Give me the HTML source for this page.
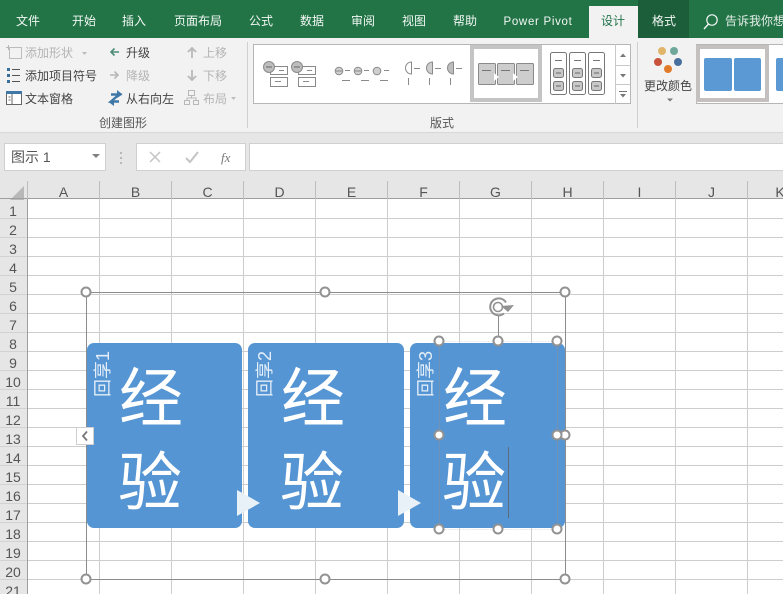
<!DOCTYPE html>
<html lang="zh"><head><meta charset="utf-8"><style>
html,body{margin:0;padding:0;background:#fff;overflow:hidden}
svg{display:block}
text{font-family:"Liberation Sans","Noto Sans CJK SC",sans-serif}
.t{font-size:12px;fill:#444}
.g{font-size:12px;fill:#b4b4b4}
.w{font-size:12px;fill:#f2f7f4;text-anchor:middle}
.h{font-size:14px;fill:#555;text-anchor:middle}
.r{font-size:14px;fill:#555;text-anchor:middle}
.big{font-size:64px;fill:#fff}
.sm{font-size:18px;fill:#e4eef8}
.hd{fill:#fff;stroke:#929292;stroke-width:2}
.ic{fill:none;stroke:#8a8a8a;stroke-width:1}
</style></head><body>
<svg width="783" height="594" viewBox="0 0 783 594" xmlns="http://www.w3.org/2000/svg">
<!-- Sheet -->
<rect x="0" y="0" width="783" height="594" fill="#fff"/>
<path d="M99.500 199V594M171.500 199V594M243.500 199V594M315.500 199V594M387.500 199V594M459.500 199V594M531.500 199V594M603.500 199V594M675.500 199V594M747.500 199V594" stroke="#cdcdcd" fill="none"/>
<path d="M27 218.500H783M27 237.500H783M27 256.500H783M27 275.500H783M27 294.500H783M27 313.500H783M27 332.500H783M27 351.500H783M27 370.500H783M27 389.500H783M27 408.500H783M27 427.500H783M27 446.500H783M27 465.500H783M27 484.500H783M27 503.500H783M27 522.500H783M27 541.500H783M27 560.500H783M27 579.500H783" stroke="#cdcdcd" fill="none"/>
<!-- Ribbon -->
<rect x="0" y="0" width="783" height="38" fill="#227447"/>
<rect x="0" y="38" width="783" height="94" fill="#f2f2f2"/>
<rect x="0" y="132" width="783" height="1" fill="#d8d8d8"/>
<rect x="0" y="133" width="783" height="47" fill="#e6e6e6"/>
<rect x="638" y="0" width="51" height="38" fill="#1b5e39"/>
<rect x="589" y="6" width="49" height="32" fill="#f2f2f2"/>
<text class="w" x="28" y="25">文件</text>
<text class="w" x="84" y="25">开始</text>
<text class="w" x="134" y="25">插入</text>
<text class="w" x="198" y="25">页面布局</text>
<text class="w" x="261" y="25">公式</text>
<text class="w" x="312" y="25">数据</text>
<text class="w" x="363" y="25">审阅</text>
<text class="w" x="414" y="25">视图</text>
<text class="w" x="465" y="25">帮助</text>
<text class="w" x="538" y="25" style="letter-spacing:.7px;font-size:11.500px">Power Pivot</text>
<text class="w" x="613" y="25" style="fill:#22744a">设计</text>
<text class="w" x="664" y="25">格式</text>
<circle cx="712" cy="20" r="5.200" fill="none" stroke="#f2f7f4" stroke-width="1.200"/>
<path d="M708.500 24L704 29" stroke="#f2f7f4" stroke-width="1.400"/>
<text x="725" y="25" style="font-size:12px;fill:#e4eee8">告诉我你想</text>

<!-- Create graphic group -->
<path d="M6 47.500h5M8.500 45v5" stroke="#b8b8b8" fill="none"/>
<rect x="9.500" y="47.500" width="12" height="11" fill="none" stroke="#bdbdbd"/>
<text class="g" x="25" y="57">添加形状</text>
<path d="M82 52h5l-2.500 3z" fill="#bdbdbd"/>
<g fill="#3a6f9c"><rect x="7" y="68" width="3" height="3"/><rect x="7" y="74" width="3" height="3"/><rect x="7" y="80" width="3" height="3"/></g>
<path d="M12 69.500h8M12 75.500h8M12 81.500h8" stroke="#555"/>
<text class="t" x="25" y="80">添加项目符号</text>
<rect x="6.500" y="91.500" width="15" height="13" fill="#fff" stroke="#666"/>
<rect x="6" y="91" width="16" height="3" fill="#3f78a8"/>
<path d="M12 94v10M8.500 97h2M8.500 100h2" stroke="#666"/>
<text class="t" x="25" y="103">文本窗格</text>

<path d="M119 52h-8m3.500-3.500L111 52l3.500 3.500" fill="none" stroke="#4d8c78" stroke-width="1.600"/>
<text class="t" x="126" y="57">升级</text>
<path d="M110 75h8m-3.500-3.500L118 75l-3.500 3.500" fill="none" stroke="#b8b8b8" stroke-width="1.600"/>
<text class="g" x="126" y="80">降级</text>
<path d="M111 94.500h8l-8 7h8" fill="none" stroke="#3f78a8" stroke-width="2.400"/>
<path d="M117 90l5.500 4.500-5.500 3.500zM114 98l-5.500 4 5.500 4z" fill="#3f78a8"/>
<text class="t" x="126" y="103">从右向左</text>

<path d="M192 58v-10m-4 4l4-4 4 4" fill="none" stroke="#b8b8b8" stroke-width="1.800"/>
<text class="g" x="203" y="57">上移</text>
<path d="M192 70v10m-4-4l4 4 4-4" fill="none" stroke="#b8b8b8" stroke-width="1.800"/>
<text class="g" x="203" y="80">下移</text>
<path d="M188.500 90.500h6v5h-6zM184.500 100.500h5v4h-5zM193.500 100.500h5v4h-5zM191.500 95.500v3M187 100v-2h9v2" fill="none" stroke="#b8b8b8"/>
<text class="g" x="203" y="103">布局</text>
<path d="M231 97h5l-2.500 3z" fill="#bdbdbd"/>
<text class="t" x="99" y="127" style="fill:#555">创建图形</text>
<rect x="247" y="42" width="1" height="86" fill="#cfcfcf"/>

<!-- Layout gallery -->
<rect x="253.500" y="44.500" width="377" height="59" fill="#fff" stroke="#b6b6b6"/>
<g class="ic">
<rect x="270.500" y="66.500" width="17" height="8"/><rect x="270.500" y="77.500" width="17" height="9"/>
<rect x="298.500" y="66.500" width="17" height="8"/><rect x="298.500" y="77.500" width="17" height="9"/>
<path d="M275 81.500h6M303 81.500h6M279 70.500h5M307 70.500h5"/>
</g>
<circle cx="269" cy="67" r="5.500" fill="#bdbdbd" stroke="#8a8a8a"/><path d="M266 67h6" stroke="#666"/>
<circle cx="297" cy="67" r="5.500" fill="#bdbdbd" stroke="#8a8a8a"/><path d="M294 67h6" stroke="#666"/>
<g fill="#cfcfcf" stroke="#8a8a8a"><circle cx="339" cy="71" r="3.800"/><circle cx="358" cy="71" r="3.800"/><circle cx="377" cy="71" r="3.800"/></g>
<path d="M336 71h6M355 71h6M345 70.500h5M364 70.500h5M384 70.500h5M342 80.500h8M361 80.500h8M380 80.500h8" stroke="#8a8a8a"/>
<path d="M411.500 62a6 6 0 0 0 0 12z" fill="#fff" stroke="#8a8a8a"/>
<path d="M432.500 62a6 6 0 0 0 0 12z" fill="#cfcfcf" stroke="#8a8a8a"/>
<path d="M453.500 62a6 6 0 0 0 0 12z" fill="#bdbdbd" stroke="#8a8a8a"/>
<path d="M414 68.500h6M435 68.500h6M456 68.500h6M408.500 78v7M429.500 78v7M450.500 78v7" stroke="#8a8a8a"/>
<rect x="472" y="47" width="68" height="53" fill="#fff" stroke="#c4c4c4" stroke-width="4"/>
<g fill="#cdcdcd" stroke="#8a8a8a"><rect x="478.500" y="63.500" width="17" height="21" rx="1"/><rect x="497.500" y="63.500" width="17" height="21" rx="1"/><rect x="516.500" y="63.500" width="17" height="21" rx="1"/></g>
<path d="M482 70.500h9M501 70.500h9M520 70.500h9" stroke="#777"/>
<path d="M494 73l5 4-5 4zM513 73l5 4-5 4z" fill="#fff"/>
<g fill="#fff" stroke="#777"><rect x="550.500" y="52.500" width="16" height="42" rx="2"/><rect x="569.500" y="52.500" width="16" height="42" rx="2"/><rect x="588.500" y="52.500" width="16" height="42" rx="2"/></g>
<path d="M555 60.500h7M574 60.500h7M593 60.500h7" stroke="#777"/>
<g fill="#c8c8c8" stroke="#777"><rect x="553.500" y="68.500" width="10" height="9" rx="2"/><rect x="553.500" y="81.500" width="10" height="9" rx="2"/><rect x="572.500" y="68.500" width="10" height="9" rx="2"/><rect x="572.500" y="81.500" width="10" height="9" rx="2"/><rect x="591.500" y="68.500" width="10" height="9" rx="2"/><rect x="591.500" y="81.500" width="10" height="9" rx="2"/></g>
<path d="M556 73h5M556 86h5M575 73h5M575 86h5M594 73h5M594 86h5" stroke="#666"/>
<path d="M615.500 44.500v59M615.500 65.500h15M615.500 84.500h15" stroke="#c8c8c8" fill="none"/>
<path d="M620 57l3-3.500 3 3.500z" fill="#777"/><path d="M620 74h6l-3 3.500z" fill="#777"/>
<path d="M619 91.500h8" stroke="#777"/><path d="M620 94h6l-3 3.500z" fill="#777"/>
<text class="t" x="430" y="127" style="fill:#555">版式</text>
<rect x="637" y="42" width="1" height="86" fill="#cfcfcf"/>

<!-- Change colors -->
<circle cx="662" cy="51" r="4" fill="#e0b469"/>
<circle cx="674" cy="51" r="4" fill="#6fa89a"/>
<circle cx="658" cy="62" r="4" fill="#c9523c"/>
<circle cx="678" cy="62" r="4" fill="#47709f"/>
<circle cx="668" cy="69" r="4" fill="#e07b2b"/>
<text class="t" x="644" y="90">更改颜色</text>
<path d="M667 98.500h6l-3 3z" fill="#777"/>
<rect x="696.500" y="44.500" width="90" height="59" fill="#fff" stroke="#b6b6b6"/>
<rect x="698" y="47" width="69" height="53" fill="#fff" stroke="#c4c0bf" stroke-width="4"/>
<rect x="704" y="58" width="28" height="33" rx="2" fill="#5a99d4"/>
<rect x="734" y="58" width="27" height="33" rx="2" fill="#5a99d4"/>
<rect x="776" y="58" width="10" height="33" rx="2" fill="#5a99d4"/>

<!-- Formula bar -->
<rect x="4.500" y="143.500" width="101" height="27" fill="#fff" stroke="#d0d0d0"/>
<text x="11" y="162" style="font-size:14px;fill:#555">图示 1</text>
<path d="M92 154h8l-4 4z" fill="#808080"/>
<path d="M121 152v2M121 157v2M121 162v2" stroke="#a8a8a8" stroke-width="1.500"/>
<rect x="136.500" y="143.500" width="109" height="27" fill="#fff" stroke="#d0d0d0"/>
<path d="M150 152l10 10M160 152l-10 10" stroke="#c4c4c4" stroke-width="1.500"/>
<path d="M186 158l4 4 8-10" fill="none" stroke="#c4c4c4" stroke-width="2"/>
<text x="221" y="162" style="font-family:'Liberation Serif',serif;font-style:italic;font-size:13px;fill:#777">fx</text>
<rect x="249.500" y="143.500" width="540" height="27" fill="#fff" stroke="#d0d0d0"/>

<!-- Headers -->
<rect x="0" y="180" width="783" height="19" fill="#e6e6e6"/>
<rect x="0" y="199" width="27" height="395" fill="#e6e6e6"/>
<path d="M24 186v14h-14z" fill="#b8b8b8"/>
<rect x="0" y="198" width="783" height="1" fill="#9e9e9e"/>
<rect x="27" y="199" width="1" height="395" fill="#9e9e9e"/>
<path d="M27.500 181v18M99.500 181v18M171.500 181v18M243.500 181v18M315.500 181v18M387.500 181v18M459.500 181v18M531.500 181v18M603.500 181v18M675.500 181v18M747.500 181v18" stroke="#bdbdbd"/>
<g>
<text class="h" x="63.500" y="197">A</text><text class="h" x="135.500" y="197">B</text><text class="h" x="207.500" y="197">C</text><text class="h" x="279.500" y="197">D</text><text class="h" x="351.500" y="197">E</text><text class="h" x="423.500" y="197">F</text><text class="h" x="495.500" y="197">G</text><text class="h" x="567.500" y="197">H</text><text class="h" x="639.500" y="197">I</text><text class="h" x="711.500" y="197">J</text><text class="h" x="780" y="197">K</text>
</g>
<path d="M0 218.500h27M0 237.500h27M0 256.500h27M0 275.500h27M0 294.500h27M0 313.500h27M0 332.500h27M0 351.500h27M0 370.500h27M0 389.500h27M0 408.500h27M0 427.500h27M0 446.500h27M0 465.500h27M0 484.500h27M0 503.500h27M0 522.500h27M0 541.500h27M0 560.500h27M0 579.500h27" stroke="#d2d2d2"/>
<g>
<text class="r" x="13" y="216">1</text><text class="r" x="13" y="235">2</text><text class="r" x="13" y="254">3</text><text class="r" x="13" y="273">4</text><text class="r" x="13" y="292">5</text><text class="r" x="13" y="311">6</text><text class="r" x="13" y="330">7</text><text class="r" x="13" y="349">8</text><text class="r" x="13" y="368">9</text><text class="r" x="13" y="387">10</text><text class="r" x="13" y="406">11</text><text class="r" x="13" y="425">12</text><text class="r" x="13" y="444">13</text><text class="r" x="13" y="463">14</text><text class="r" x="13" y="482">15</text><text class="r" x="13" y="501">16</text><text class="r" x="13" y="520">17</text><text class="r" x="13" y="539">18</text><text class="r" x="13" y="558">19</text><text class="r" x="13" y="577">20</text><text class="r" x="13" y="596">21</text>
</g>

<!-- SmartArt frame -->
<rect x="86.500" y="292.500" width="479" height="287" fill="none" stroke="#8c8c8c" stroke-width="1"/>
<rect x="87" y="343" width="155" height="185" rx="7" fill="#5595d3"/>
<rect x="248" y="343" width="156" height="185" rx="7" fill="#5595d3"/>
<rect x="410" y="343" width="155" height="185" rx="7" fill="#5595d3"/>
<path d="M237 490l23 13-23 13z" fill="#e9f1f8"/>
<path d="M398 490l23 13-23 13z" fill="#e9f1f8"/>

<text class="sm" transform="translate(109 397) rotate(-90)">回享1</text>
<text class="sm" transform="translate(271 397) rotate(-90)">回享2</text>
<text class="sm" transform="translate(432 397) rotate(-90)">回享3</text>

<text class="big" x="119" y="421">经</text><text class="big" x="118" y="505">验</text>
<text class="big" x="281" y="421">经</text><text class="big" x="280" y="505">验</text>
<text class="big" x="443" y="421">经</text><text class="big" x="442" y="505">验</text>

<!-- Collapse button -->
<rect x="76.500" y="427.500" width="17" height="17" fill="#fff" stroke="#cfcfcf"/>
<path d="M87 431.500l-4 4.500 4 4.500" fill="none" stroke="#777" stroke-width="1.800"/>

<!-- Selection -->
<rect x="439.500" y="341.500" width="118" height="188" fill="none" stroke="#e8e8e8" stroke-dasharray="2 1"/>
<path d="M439.500 345v180M557.500 345v180" stroke="#6f93b8" stroke-width="1"/>
<path d="M508.500 447v71" stroke="#5c6b7a" stroke-width="1"/>
<path d="M498.500 316v25" stroke="#8c8c8c"/>
<path d="M504 313.500a8.500 8.500 0 1 1 2-11" fill="none" stroke="#929292" stroke-width="2"/>
<circle cx="498" cy="307" r="4.500" fill="none" stroke="#929292" stroke-width="1.600"/>
<path d="M501 306l13-1-6 7z" fill="#929292"/>

<circle class="hd" cx="86" cy="292" r="4.500"/>
<circle class="hd" cx="325" cy="292" r="4.500"/>
<circle class="hd" cx="565" cy="292" r="4.500"/>
<circle class="hd" cx="565" cy="435" r="4.500"/>
<circle class="hd" cx="86" cy="579" r="4.500"/>
<circle class="hd" cx="325" cy="579" r="4.500"/>
<circle class="hd" cx="565" cy="579" r="4.500"/>
<circle class="hd" cx="439" cy="341" r="4.500"/>
<circle class="hd" cx="498" cy="341" r="4.500"/>
<circle class="hd" cx="557" cy="341" r="4.500"/>
<circle class="hd" cx="439" cy="435" r="4.500"/>
<circle class="hd" cx="557" cy="435" r="4.500"/>
<circle class="hd" cx="439" cy="529" r="4.500"/>
<circle class="hd" cx="498" cy="529" r="4.500"/>
<circle class="hd" cx="557" cy="529" r="4.500"/>
</svg>
</body></html>
